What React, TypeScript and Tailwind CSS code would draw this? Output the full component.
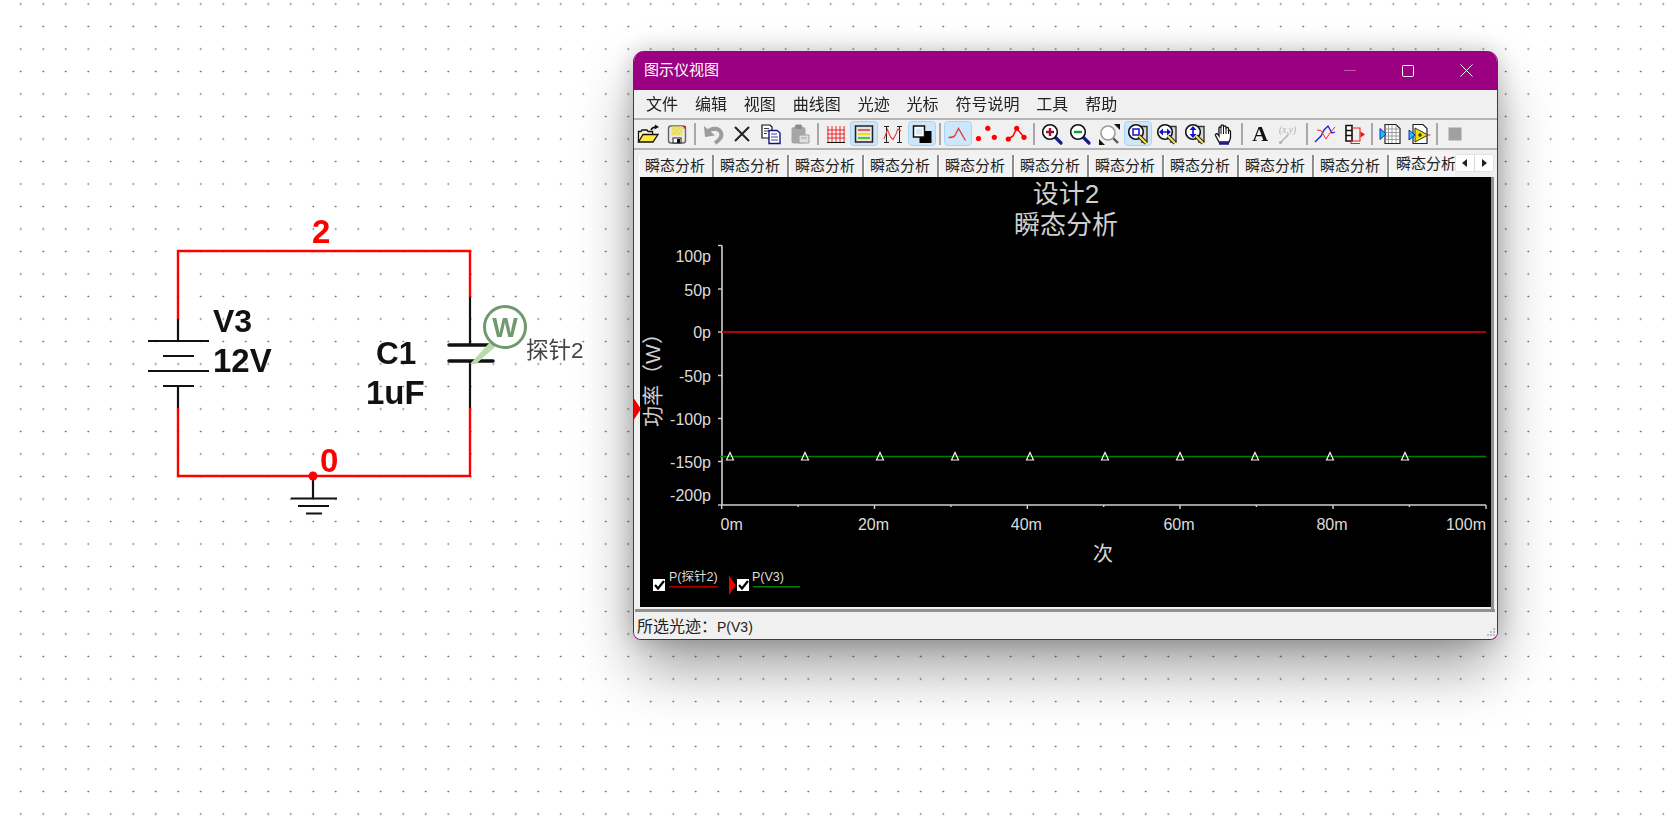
import React from "react";

const FONT = "font-['Liberation_Sans','Noto_Sans_CJK_SC',sans-serif]";

function Circuit() {
  const blk = "#111";
  const red = "#ff0000";
  return (
    <svg className={`absolute left-0 top-0 ${FONT}`} width="620" height="540" viewBox="0 0 620 540">
      <g fill="none" strokeWidth="2.2">
        <path d="M178 319V251H470V297" stroke={red} strokeWidth="2.4" />
        <path d="M178 408V476H470V408" stroke={red} strokeWidth="2.4" />
        <path d="M178 319V341M148 341H209M163 356H194M148 371H209M163 386H194M178 386V408" stroke={blk} />
        <path d="M470 297V345M470 361V408" stroke={blk} />
        <path d="M449 345H493M449 361H493" stroke={blk} strokeWidth="3.5" strokeLinecap="round" />
        <path d="M313 477V498M291 498.5H337M298 506H329M306 513.5H322" stroke={blk} />
      </g>
      <circle cx="313" cy="476" r="4.5" fill={red} />
      <polygon points="470,364 490,342 495,347 476,364" fill="#b9dcae" />
      <circle cx="505" cy="327" r="20.5" fill="#fff" stroke="#6f9a6f" strokeWidth="3" />
      <text x="505" y="337" textAnchor="middle" fontSize="27" fontWeight="700" fill="#6f9a6f">W</text>
      <g fontWeight="700" fill="#111">
        <text x="213" y="332" fontSize="32">V3</text>
        <text x="213" y="372" fontSize="33">12V</text>
        <text x="376" y="364" fontSize="31.5">C1</text>
        <text x="366" y="404" fontSize="33">1uF</text>
      </g>
      <g fontSize="33" fontWeight="700" fill={red}>
        <text x="312" y="243">2</text>
        <text x="320" y="472">0</text>
      </g>
      <text x="526" y="358" fontSize="22.5" fill="#444">探针2</text>
    </svg>
  );
}

const I = ({ children }: { children: React.ReactNode }) => (
  <svg width="24" height="24" viewBox="0 0 24 24" fill="none">
    {children}
  </svg>
);

const Mag = ({ children, handle = "#1a1a8c" }: { children?: React.ReactNode; handle?: string }) => (
  <>
    <path d="M15 15L21 21" stroke={handle} strokeWidth="3.2" strokeLinecap="round" />
    <circle cx="10" cy="10" r="7.3" fill="#fff" stroke="#111" strokeWidth="1.6" />
    {children}
  </>
);

const Pencil = () => (
  <>
    <path d="M13 14L20 21" stroke="#222" strokeWidth="4" />
    <path d="M13 14L20 21" stroke="#f2e34a" strokeWidth="2.2" />
  </>
);

const Doc = () => <path d="M9 4.5H21V20H15" fill="#d8d8d8" stroke="#333" strokeWidth="1.4" />;

const icons: Record<string, React.ReactNode> = {
  open: (
    <I>
      <path d="M2.5 20V9.5H5L6 8H11L12 9.5H16.5V12" fill="#fff9c8" stroke="#111" strokeWidth="1.3" />
      <path d="M2.5 20L7 12.5H22L17 20Z" fill="#ffe93c" stroke="#111" strokeWidth="1.3" />
      <path d="M15 8C16 5.5 18 5 20 5" stroke="#111" strokeWidth="1.5" />
      <path d="M19 2.5L23 5L18.5 7.5Z" fill="#111" />
    </I>
  ),
  save: (
    <I>
      <rect x="3.5" y="4" width="17" height="17" rx="2.5" fill="#e9e9e9" stroke="#666" strokeWidth="1.4" />
      <rect x="6.5" y="4.5" width="11" height="9" fill="#f2e65a" />
      <path d="M7 8L11 4.5M8 12L15.5 5M12 13L17.5 8" stroke="#c9c9c9" strokeWidth="1" />
      <rect x="8" y="16" width="8" height="5" fill="#fff" stroke="#222" />
      <rect x="12" y="17" width="3" height="4" fill="#111" />
      <rect x="18.5" y="4" width="2.5" height="2.5" fill="#e02020" />
    </I>
  ),
  undo: (
    <I>
      <path d="M3 4L4 15L14 13.5Z" fill="#9c9c9c" />
      <path d="M6 11C10 5 18 5.5 20 10.5C21.5 14.5 18.5 18.5 14 21" stroke="#9c9c9c" strokeWidth="4" />
    </I>
  ),
  cut: (
    <I>
      <path d="M5 5L19 19M19 5L5 19" stroke="#222" strokeWidth="2" />
    </I>
  ),
  copy: (
    <I>
      <path d="M3 3H11L13 5V16H3Z" fill="#fff" stroke="#111" strokeWidth="1.2" />
      <path d="M5 6.5H10M5 9H10M5 11.5H8" stroke="#111" strokeWidth=".8" />
      <path d="M10 8.5H18L21 11V21.5H10Z" fill="#fff" stroke="#101080" strokeWidth="1.4" />
      <path d="M12 12H18M12 15H19M12 18H19" stroke="#101080" strokeWidth=".8" />
    </I>
  ),
  paste: (
    <I>
      <rect x="3.5" y="5" width="14" height="16.5" rx="2.5" fill="#a6a6a6" />
      <rect x="7" y="2.5" width="7" height="4.5" rx="1.5" fill="#8c8c8c" />
      <path d="M11 13H21V21H11Z" fill="#dedede" stroke="#a0a0a0" />
      <path d="M13 16H19" stroke="#a0a0a0" />
    </I>
  ),
  grid: (
    <I>
      <path d="M4 4V20M8 4V20M12 4V20M16 4V20M20 4V20M3 8H21M3 12H21M3 16H21" stroke="#f01010" strokeWidth=".9" />
      <path d="M3 20.5H21" stroke="#111" strokeWidth="1.2" />
    </I>
  ),
  legend: (
    <I>
      <rect x="3.5" y="4" width="17" height="16" fill="#e4e4e4" stroke="#222" strokeWidth="1.5" />
      <path d="M6 8H18" stroke="#e03030" strokeWidth="1.4" />
      <path d="M6 12H18" stroke="#e8e800" strokeWidth="1.8" />
      <path d="M6 16H18" stroke="#20b020" strokeWidth="1.4" />
    </I>
  ),
  cursors: (
    <I>
      <path d="M5.5 5V20M18.5 5V20" stroke="#222" strokeWidth="1" />
      <path d="M3 4.5H8M16 4.5H21M3 20.5H8M16 20.5H21" stroke="#222" strokeWidth="1" />
      <path d="M3 17L6.5 7.5L9.5 15L12 17.5L15 12L17 7L20 9" stroke="#d84040" strokeWidth="1.1" />
    </I>
  ),
  overlay: (
    <I>
      <rect x="9.5" y="9" width="12" height="12" fill="#000" />
      <rect x="3.5" y="4" width="11" height="11" fill="#fff" stroke="#111" strokeWidth="1.5" />
      <rect x="6" y="6.5" width="6" height="6" fill="#d9e8f5" />
    </I>
  ),
  line: (
    <I>
      <path d="M2.5 15.5C6 15.5 8 15 9 13.5L12.5 6.5L19.5 18.5" stroke="#e83a3a" strokeWidth="1.4" />
    </I>
  ),
  dots: (
    <I>
      <circle cx="3.5" cy="16.5" r="2.6" fill="#f00" />
      <circle cx="12.8" cy="6.3" r="2.6" fill="#f00" />
      <circle cx="19.3" cy="15.3" r="2.6" fill="#f00" />
    </I>
  ),
  linedots: (
    <I>
      <path d="M4.3 17L9 14L12.7 6.3L20 15.3" stroke="#f00" strokeWidth="1.5" />
      <circle cx="4.3" cy="17" r="2.6" fill="#f00" />
      <circle cx="12.7" cy="6.3" r="2.6" fill="#f00" />
      <circle cx="20" cy="15.3" r="2.6" fill="#f00" />
    </I>
  ),
  zoomin: (
    <I>
      <Mag>
        <path d="M6 10H14M10 6V14" stroke="#a01030" strokeWidth="2.4" />
      </Mag>
    </I>
  ),
  zoomout: (
    <I>
      <Mag>
        <path d="M6 10H14" stroke="#10a040" strokeWidth="2.4" />
      </Mag>
    </I>
  ),
  zoomfit: (
    <I>
      <path d="M15 15L21 21" stroke="#555" strokeWidth="2.4" />
      <circle cx="11" cy="11" r="7" fill="#fff" stroke="#999" strokeWidth="1.6" />
      <path d="M23 2V8L17 2ZM2 23V17L8 23Z" fill="#111" />
    </I>
  ),
  zoombox: (
    <I>
      <Doc />
      <circle cx="10" cy="10" r="7.3" fill="#fff" stroke="#111" strokeWidth="1.6" />
      <rect x="7" y="7" width="6" height="6" fill="#fff" stroke="#1010d0" strokeWidth="1.5" />
      <Pencil />
    </I>
  ),
  zoomx: (
    <I>
      <Doc />
      <circle cx="10" cy="10" r="7.3" fill="#fff" stroke="#111" strokeWidth="1.6" />
      <path d="M7 10H13" stroke="#1010d0" strokeWidth="1.6" />
      <path d="M4 10L8 6.5V13.5ZM16 10L12 6.5V13.5Z" fill="#1010d0" />
      <Pencil />
    </I>
  ),
  zoomy: (
    <I>
      <Doc />
      <circle cx="10" cy="10" r="7.3" fill="#fff" stroke="#111" strokeWidth="1.6" />
      <path d="M10 7V13" stroke="#1010d0" strokeWidth="1.6" />
      <path d="M10 4L6.5 8H13.5ZM10 16L6.5 12H13.5Z" fill="#1010d0" />
      <Pencil />
    </I>
  ),
  hand: (
    <I>
      <path
        d="M7 20L3.5 13.5C3 12 5 11 6 12.5L7 14V6C7 4.5 9 4.5 9 6V4C9 2.5 11.5 2.5 11.5 4V5C11.5 3.5 14 3.5 14 5V6.5C14 5 16.5 5 16.5 6.5V9C16.5 8 18.5 8 18.5 9.5V16L17 20Z"
        fill="#fff"
        stroke="#111"
        strokeWidth="1.3"
      />
      <path d="M9 6V12M11.5 5V12M14 6V12M16.5 8V12" stroke="#111" strokeWidth="1" />
      <path d="M7 21.5H17" stroke="#1a1a8c" strokeWidth="2.4" />
    </I>
  ),
  xy: (
    <I>
      <text x="2" y="11" fontSize="9.5" fontStyle="italic" fill="#b0b0b0" className="font-['Liberation_Serif',serif]">
        (x,y)
      </text>
      <path d="M3 21L11 13" stroke="#b0b0b0" strokeWidth="1.5" />
      <circle cx="3.5" cy="20.5" r="1.6" fill="#b0b0b0" />
    </I>
  ),
  cross: (
    <I>
      <path d="M2 20L8 14L11 8L15 4L19 11L22 10" stroke="#1818ee" strokeWidth="1.3" />
      <path d="M4 8L8 8.5L13 17L17 11L22 5" stroke="#f03030" strokeWidth="1" />
    </I>
  ),
  exportt: (
    <I>
      <path d="M4 3.5H10V8.5H4ZM4 8.5H10V13.5H4ZM4 13.5H10V19H4Z" fill="#fff" stroke="#111" strokeWidth="1.6" />
      <path d="M10 6H18V19H9V21.5H18" stroke="#f02020" strokeWidth="1.1" />
      <path d="M18.5 9.5L23 12.5L18.5 15.5Z" fill="#f01010" />
    </I>
  ),
  grapher: (
    <I>
      <path d="M7 2.5H18L22 6.5V21.5H7Z" fill="#fff" stroke="#222" strokeWidth="1.2" />
      <path d="M7 7H22M7 10.5H22M7 14H22M7 17.5H22M10.5 3V21M14 3V21M18 3V21" stroke="#888" strokeWidth=".8" />
      <path d="M2 6.5L8 12L2 17.5Z" fill="#18c8e8" stroke="#1010c0" strokeWidth=".9" />
    </I>
  ),
  labview: (
    <I>
      <path d="M6 2.5H16L20 6.5V21.5H6Z" fill="#fff" stroke="#222" strokeWidth="1.2" />
      <path d="M8 6L21 13L8 20Z" fill="#ece000" stroke="#222" strokeWidth=".9" />
      <path d="M11 13H15M13 11V15" stroke="#111" strokeWidth="1.1" />
      <path d="M20 13H23.5" stroke="#e03030" strokeWidth="1.1" />
      <path d="M2 8L8 13L2 18Z" fill="#18c8e8" stroke="#1010c0" strokeWidth=".9" />
    </I>
  ),
  stop: (
    <I>
      <rect x="5.5" y="5.5" width="13" height="13" fill="#a0a0a0" />
    </I>
  ),
};

type Item = { k: string; on?: boolean } | "sep" | "A";
const tools: Item[] = [
  { k: "open" }, { k: "save" }, "sep",
  { k: "undo" }, { k: "cut" }, { k: "copy" }, { k: "paste" }, "sep",
  { k: "grid" }, { k: "legend", on: true }, { k: "cursors" }, { k: "overlay", on: true }, "sep",
  { k: "line", on: true }, { k: "dots" }, { k: "linedots" }, "sep",
  { k: "zoomin" }, { k: "zoomout" }, { k: "zoomfit" }, { k: "zoombox", on: true }, { k: "zoomx" }, { k: "zoomy" }, { k: "hand" }, "sep",
  "A", { k: "xy" }, "sep",
  { k: "cross" }, { k: "exportt" }, "sep",
  { k: "grapher" }, { k: "labview" }, "sep",
  { k: "stop" },
];

function Toolbar() {
  return (
    <div className="flex h-[30px] items-center border-b-2 border-[#b4b4b4] pb-[1px]">
      {tools.map((t, i) => {
        if (t === "sep")
          return (
            <div key={i} className="flex w-[7.2px] justify-center">
              <div className="h-[22px] w-[2px] bg-[#a8a8a8]" />
            </div>
          );
        if (t === "A")
          return (
            <div key={i} className="flex h-[25px] w-[28.8px] items-center justify-center font-['Liberation_Serif',serif] text-[22px] font-bold text-[#111]">
              A
            </div>
          );
        return (
          <div key={i} className="flex w-[28.8px] justify-center">
            <div
              className={
                t.on
                  ? "flex h-[25px] w-[28px] items-center justify-center rounded-[4px] border border-[#a6d5fb] bg-[#cde6fa]"
                  : "flex h-[25px] w-[28px] items-center justify-center"
              }
            >
              {icons[t.k]}
            </div>
          </div>
        );
      })}
    </div>
  );
}

const menu = ["文件", "编辑", "视图", "曲线图", "光迹", "光标", "符号说明", "工具", "帮助"];

function Tabs() {
  return (
    <div className="flex h-[27px] pl-[5px] text-[15px] leading-none text-[#222]">
      {Array.from({ length: 10 }).map((_, i) => (
        <div key={i} className="mt-[5px] flex h-[22px] w-[75px] items-center border-r-2 border-l border-r-[#8c8c8c] border-l-white bg-[#f2f2f2] pb-[2px] pl-[5px]">
          瞬态分析
        </div>
      ))}
      <div className="mt-[2px] flex h-[25px] w-[66px] items-center overflow-hidden whitespace-nowrap border-l border-white bg-[#f4f4f4] pl-[6px] pb-[2px]">
        瞬态分析
      </div>
      <div className="mt-[4px] flex h-[18px] rounded-[2px] border border-[#e2e2e2] bg-white">
        <div className="flex h-full w-[19px] items-center justify-center border-r border-[#d8d8d8]">
          <svg width="6" height="8" viewBox="0 0 6 8"><path d="M5 0V8L0 4Z" fill="#222" /></svg>
        </div>
        <div className="flex h-full w-[18px] items-center justify-center">
          <svg width="6" height="8" viewBox="0 0 6 8"><path d="M1 0V8L6 4Z" fill="#222" /></svg>
        </div>
      </div>
    </div>
  );
}

function Check({ x, y }: { x: number; y: number }) {
  return (
    <g transform={`translate(${x} ${y})`}>
      <rect width="12" height="12" fill="#fff" />
      <path d="M2 6L5 9.5L11 2" stroke="#000" strokeWidth="2.2" fill="none" />
    </g>
  );
}

function Chart() {
  const yt = [
    [245.5, 262, "100p"],
    [289, 296, "50p"],
    [332, 338, "0p"],
    [375.5, 382, "-50p"],
    [418.5, 425, "-100p"],
    [461.5, 468, "-150p"],
    [505, 501, "-200p"],
  ] as const;
  const xMaj = [721.7, 874.5, 1027.3, 1180, 1333, 1486];
  const xLab = ["0m", "20m", "40m", "60m", "80m", "100m"];
  const tri = [730, 805, 880, 955, 1030, 1105, 1180, 1255, 1330, 1405];
  return (
    <svg width="851" height="430" viewBox="640 177 851 430" className="block overflow-visible">
      <rect x="640" y="177" width="851" height="430" fill="#000" />
      <g textAnchor="middle" fontSize="26" fill="#cfcfcf">
        <text x="1066" y="203">设计2</text>
        <text x="1066" y="234">瞬态分析</text>
      </g>
      <path d="M722 245.5V505H1486" stroke="#d0d0d0" strokeWidth="1.6" fill="none" />
      {yt.map(([t, b, l]) => (
        <g key={l}>
          <path d={`M718 ${t}H722`} stroke="#d0d0d0" strokeWidth="1.4" />
          <text x="711" y={b} textAnchor="end" fontSize="16" fill="#dcdcdc">{l}</text>
        </g>
      ))}
      {xMaj.map((x, i) => (
        <g key={x}>
          <path d={`M${x} 505V509`} stroke="#d0d0d0" strokeWidth="1.4" />
          {i < 5 && <path d={`M${x + 76.4} 505V507`} stroke="#d0d0d0" strokeWidth="1.4" />}
          <text
            x={i === 0 ? 720.5 : i === 5 ? 1486 : x - 1}
            y="530"
            textAnchor={i === 0 ? "start" : i === 5 ? "end" : "middle"}
            fontSize="16"
            fill="#dcdcdc"
          >
            {xLab[i]}
          </text>
        </g>
      ))}
      <text x="1103" y="561" textAnchor="middle" fontSize="20" fill="#d8d8d8">次</text>
      <text transform="translate(660 375) rotate(-90)" textAnchor="middle" fontSize="21" fill="#cfcfcf">功率（W）</text>
      <path d="M722 332H1486" stroke="#b00000" strokeWidth="1.8" />
      <path d="M720 456.5H1486" stroke="#008000" strokeWidth="1.4" />
      {tri.map((x) => (
        <path key={x} d={`M${x} 452.5L${x + 3.5} 460H${x - 3.5}Z`} fill="none" stroke="#f2f2f2" strokeWidth="1.2" />
      ))}
      <polygon points="633,397 641,409 633,421" fill="#f00000" />
      <Check x={653} y={579} />
      <text x="669" y="581" fontSize="12.5" fill="#dcdcdc">P(探针2)</text>
      <path d="M669 586.8H718" stroke="#b00000" strokeWidth="1.6" />
      <polygon points="729,575 735.5,585 729,595" fill="#f00000" />
      <Check x={737} y={579} />
      <text x="752" y="581" fontSize="12.5" fill="#dcdcdc">P(V3)</text>
      <path d="M753 586.8H800" stroke="#008000" strokeWidth="1.6" />
    </svg>
  );
}

function Window() {
  return (
    <div className={`absolute left-[633px] top-[51px] flex h-[589px] w-[865px] flex-col overflow-hidden rounded-t-[11px] rounded-b-[8px] border-x border-b border-[#9b0082] bg-[#f0f0f0] shadow-[0_30px_60px_-4px_rgba(0,0,0,0.4),0_0_24px_rgba(0,0,0,0.2)] ${FONT}`}>
      <div className="relative flex h-[39px] shrink-0 items-center justify-between bg-[#9b0082] pl-[10px] text-[15px] text-white">
        <span>图示仪视图</span>
        <div className="flex items-center gap-[46px] pr-[24px]">
          <div className="h-[1px] w-[12px] bg-[#b95aa8]" />
          <div className="h-[12px] w-[12px] rounded-[1.5px] border border-white" />
          <svg width="13" height="13" viewBox="0 0 13 13"><path d="M.5.5L12.5 12.5M12.5.5L.5 12.5" stroke="#fff" strokeWidth="1" /></svg>
        </div>
      </div>
      <div className="flex h-[30px] shrink-0 items-center gap-[16.9px] border-b-2 border-[#b4b4b4] pl-[12px] pt-[1px] text-[16px] leading-none text-[#222]">
        {menu.map((m) => (
          <span key={m}>{m}</span>
        ))}
      </div>
      <Toolbar />
      <Tabs />
      <div className="ml-[6px] w-[851px]">
        <Chart />
      </div>
      <div className="ml-[1px] mr-[2px] mt-[2px] h-[3px] bg-[#909090]" />
      <div className="relative flex flex-1 items-center bg-[#f0f0f0] pl-[3px] pt-[3px] text-[16px] leading-none text-[#222]">
        所选光迹：<span className="text-[14px]">P(V3)</span>
        <svg className="absolute bottom-[1px] right-[1px]" width="11" height="11" viewBox="0 0 11 11">
          <path d="M8 1h2v2H8zM5 4h2v2H5zM8 4h2v2H8zM2 7h2v2H2zM5 7h2v2H5zM8 7h2v2H8z" fill="#bdbdbd" />
        </svg>
      </div>
      <div className="pointer-events-none absolute bottom-[29px] right-[1px] top-[126px] w-[5px] border-l-[3px] border-[#909090]" />
    </div>
  );
}

export default function App() {
  return (
    <div className="relative h-[822px] w-[1679px] overflow-hidden bg-white bg-[radial-gradient(circle,#555_0.55px,transparent_1.15px)] bg-[length:22.5px_22.5px] bg-[position:9.5px_15.25px]">
      <div className="h-full w-full blur-[0.3px]">
        <Circuit />
        <Window />
      </div>
    </div>
  );
}
